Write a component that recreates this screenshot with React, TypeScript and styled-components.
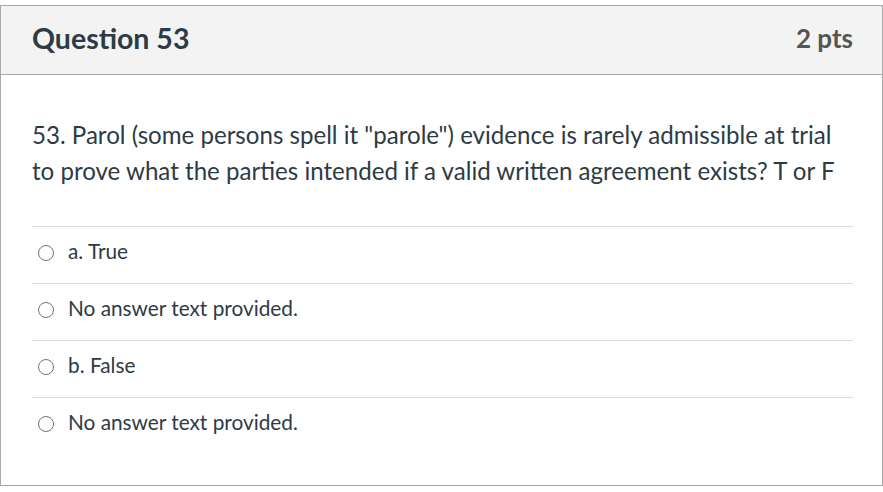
import { FC } from 'react';
import styled, { createGlobalStyle } from 'styled-components';

const GlobalStyle = createGlobalStyle`
  html, body {
    margin: 0;
    padding: 0;
    background: #ffffff;
  }
  body {
    font-family: Lato, 'Open Sans', 'Liberation Sans', sans-serif;
    color: #2d3b45;
  }
`;

const Page = styled.div`
  padding-top: 5px;
`;

const QuestionCard = styled.div`
  width: 883px;
  height: 481px;
  box-sizing: border-box;
  border: 1px solid #a9a9a9;
  background: #ffffff;
`;

const Header = styled.div`
  display: flex;
  align-items: center;
  justify-content: space-between;
  height: 69px;
  box-sizing: border-box;
  padding: 0 29px 4px 31px;
  background: #f3f3f3;
  border-bottom: 1px solid #a9a9a9;
`;

const Title = styled.h2`
  margin: 0;
  font-size: 28.5px;
  font-weight: 700;
  color: #2d3b45;
`;

const Points = styled.div`
  font-size: 26px;
  font-weight: 700;
  color: #555555;
`;

const Body = styled.div`
  padding: 42px 29px 0 31px;
`;

const QuestionText = styled.p`
  max-width: 810px;
  margin: 0 0 37px;
  font-size: 24.1px;
  line-height: 36px;
  color: #2d3b45;
`;

const Answers = styled.div`
  display: flex;
  flex-direction: column;
`;

const AnswerRow = styled.label`
  display: flex;
  align-items: center;
  gap: 14px;
  height: 57px;
  box-sizing: border-box;
  padding-left: 6px;
  border-top: 1px solid #dcdcdc;
`;

const AnswerText = styled.span`
  padding-bottom: 9px;
  font-size: 20.8px;
  color: #2d3b45;
`;

const Radio = styled.span`
  width: 16px;
  height: 16px;
  margin-bottom: 4px;
  box-sizing: border-box;
  border: 1.5px solid #737373;
  border-radius: 50%;
  flex-shrink: 0;
`;

const answers = ['a. True', 'No answer text provided.', 'b. False', 'No answer text provided.'];

const App: FC = () => (
  <Page>
    <GlobalStyle />
    <QuestionCard>
      <Header>
        <Title>Question 53</Title>
        <Points>2 pts</Points>
      </Header>
      <Body>
        <QuestionText>
          53. Parol (some persons spell it "parole") evidence is rarely admissible at trial to prove
          what the parties intended if a valid written agreement exists? T or F
        </QuestionText>
        <Answers>
          {answers.map((a, idx) => (
            <AnswerRow key={`answer-${idx}`}>
              <Radio />
              <AnswerText>{a}</AnswerText>
            </AnswerRow>
          ))}
        </Answers>
      </Body>
    </QuestionCard>
  </Page>
);

export default App;
